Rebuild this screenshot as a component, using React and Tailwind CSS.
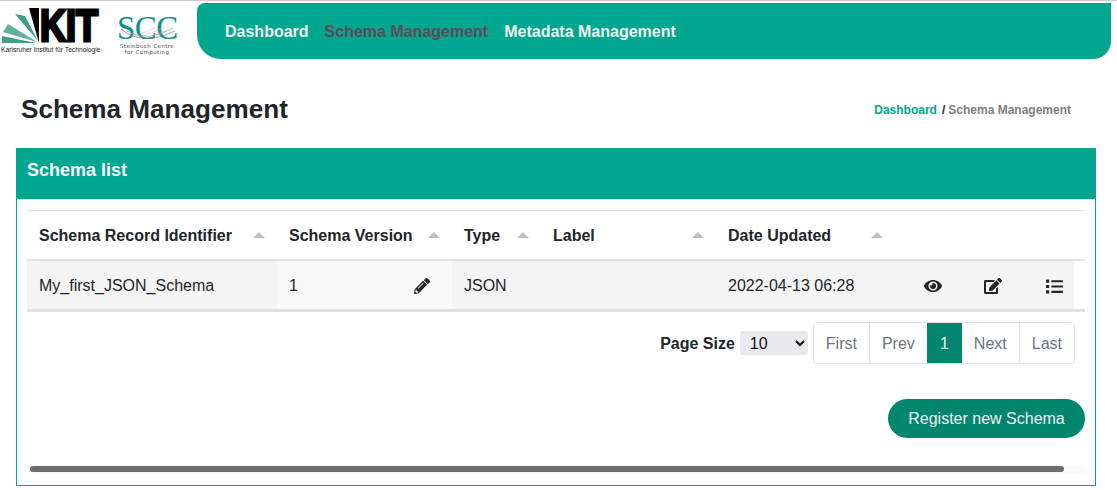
import React from 'react';
import { FaEye, FaEdit, FaList, FaPencilAlt } from 'react-icons/fa';

const headers = [
  { label: 'Schema Record Identifier', width: 'w-[250px]' },
  { label: 'Schema Version', width: 'w-[175px]' },
  { label: 'Type', width: 'w-[89px]' },
  { label: 'Label', width: 'w-[175px]' },
  { label: 'Date Updated', width: 'w-[179px]' },
];

const pages = ['First', 'Prev', '1', 'Next', 'Last'];

const SortCaret = () => (
  <span className="w-0 h-0 border-x-[6px] border-x-transparent border-b-[6px] border-b-[#bdbdbd]" />
);

const KitLogo = () => (
  <div className="w-[104px] flex flex-col items-start">
    <div className="relative h-[37px] w-[100px]">
      <svg className="absolute left-0 top-0" width="40" height="36" viewBox="0 0 40 36">
        <path d="M1 35 L1 28 L35 35 Z" fill="#3f9f86" />
        <path d="M2 24 L7 16 L36 34 Z" fill="#5fb29c" />
        <path d="M14 6 L24 8 L37 33 Z" fill="#3f9f86" />
        <path d="M28 0 L38 0 L38 35 Z" fill="#000000" />
      </svg>
      <span className="absolute left-[39px] top-0 origin-left scale-x-[0.82] font-['Liberation_Sans',sans-serif] font-bold text-[44px] leading-[36px] [-webkit-text-stroke:3px_black] text-black">
        KIT
      </span>
    </div>
    <span className="font-['Liberation_Sans',sans-serif] text-[6.7px] leading-[9px] whitespace-nowrap text-[#222]">
      Karlsruher Institut für Technologie
    </span>
  </div>
);

const SccLogo = () => (
  <div className="w-[62px] flex flex-col items-center ml-[11px] pt-[4px]">
    <div className="relative h-[29px] w-[60px]">
      <span className="absolute left-0 top-[3px] font-['Liberation_Serif',serif] text-[33px] leading-[26px] tracking-[-0.5px] text-[#0f8f8f]">
        SCC
      </span>
      <svg className="absolute left-0 top-[13px]" width="60" height="16" viewBox="0 0 60 16" fill="none">
        <path d="M4 4 Q26 22 58 6" stroke="#777" strokeWidth="0.7" />
        <path d="M10 6 Q30 18 56 3" stroke="#999" strokeWidth="0.7" />
        <path d="M18 11 L38 3 M24 12 L44 4 M30 13 L50 5" stroke="#aaa" strokeWidth="0.4" />
      </svg>
    </div>
    <span className="font-['DejaVu_Sans',sans-serif] text-[5.5px] leading-[6px] tracking-[0.4px] whitespace-nowrap mt-[2px] text-[#444]">
      Steinbuch Centre
    </span>
    <span className="font-['DejaVu_Sans',sans-serif] text-[5.5px] leading-[6px] tracking-[0.4px] whitespace-nowrap text-[#444]">
      for Computing
    </span>
  </div>
);

export default function App() {
  return (
    <div className="w-[1117px] h-[490px] overflow-hidden bg-white font-['Liberation_Sans',sans-serif] text-[16px] text-[#212529]">
      <div className="h-px bg-[#cccccc]" />

      <header className="flex items-start h-[58px] pt-[2px] w-[1111px]">
        <div className="flex items-start w-[197px] pt-[5px] pl-[1px]">
          <KitLogo />
          <SccLogo />
        </div>
        <nav className="flex-1 h-[56px] bg-[#00a78e] rounded-tl-[8px] rounded-bl-[24px] rounded-br-[18px] flex items-center gap-[16px] pl-[28px] pt-[2px] font-bold text-[16px]">
          <span className="text-[#f2f2f2]">Dashboard</span>
          <span className="text-[#5e4b56]">Schema Management</span>
          <span className="text-[#f2f2f2]">Metadata Management</span>
        </nav>
      </header>

      <div className="flex items-center justify-between h-[89px] pl-[21px] pr-[46px] pt-[13px] w-[1117px]">
        <h1 className="text-[26.1px] font-bold text-[#212529]">Schema Management</h1>
        <div className="text-[12px] font-bold flex items-center">
          <span className="text-[#00a78e]">Dashboard</span>
          <span className="text-[#212529] ml-[5px] mr-[3px]">/</span>
          <span className="text-[#808080]">Schema Management</span>
        </div>
      </div>

      <section className="ml-[16px] w-[1080px] h-[338px] border border-[#00a78e] border-t-0 flex flex-col">
        <div className="h-[51px] shrink-0 -ml-px -mr-px bg-[#00a78e] pl-[11px] pt-[11px] text-[18px] font-bold leading-[22px] text-[#f5f5f5]">
          Schema list
        </div>

        <div className="flex-1 px-[10px] pt-[11px] flex flex-col">
          <div className="border-t border-[#dee2e6] border-b-2 border-b-[#dee2e6] h-[51px] flex items-center font-bold">
            {headers.map((h) => (
              <div key={h.label} className={`${h.width} pl-[12px] pr-[12px] pt-[2px] flex items-center justify-between`}>
                <span className="whitespace-nowrap">{h.label}</span>
                <span className="-mt-[2px] flex">
                  <SortCaret />
                </span>
              </div>
            ))}
          </div>

          <div className="border-b-[3px] border-[#dee2e6] h-[51px] flex">
            <div className="w-[1047px] bg-[#f4f4f4] flex items-center">
              <div className="w-[250px] pl-[12px] pt-[2px]">My_first_JSON_Schema</div>
              <div className="w-[175px] h-full bg-[#f8f8f8] pl-[12px] pr-[22px] pt-[2px] flex items-center justify-between">
                <span>1</span>
                <FaPencilAlt className="text-[16px]" />
              </div>
              <div className="w-[89px] pl-[12px] pt-[2px]">JSON</div>
              <div className="w-[175px]" />
              <div className="w-[165px] pl-[12px] pt-[2px] whitespace-nowrap">2022-04-13 06:28</div>
              <div className="w-[193px] flex items-center gap-[42px] pl-[43px] pt-[2px]">
                <FaEye className="text-[18px]" />
                <FaEdit className="text-[18px]" />
                <FaList className="text-[17px] ml-[2px]" />
              </div>
            </div>
          </div>

          <div className="flex items-center justify-end mt-[10px] w-[1048px]">
            <span className="font-bold mr-[5px] pt-[2px]">Page Size</span>
            <select
              defaultValue="10"
              className="w-[68px] h-[24px] bg-[#e9e9ed] rounded-[3px] pl-[6px] mr-[5px] text-[16px] text-[#111111]"
            >
              <option value="10">10</option>
            </select>
            <div className="flex h-[42px] border border-[#dee2e6] rounded-[4px] overflow-hidden text-[#6c757d]">
              {pages.map((p) =>
                p === '1' ? (
                  <span key={p} className="w-[35px] -ml-px bg-[#00856f] text-[#f2f2f2] pt-[2px] flex items-center justify-center">
                    {p}
                  </span>
                ) : (
                  <span key={p} className="px-[12px] pt-[2px] flex items-center border-r border-[#dee2e6] last:border-r-0">
                    {p}
                  </span>
                )
              )}
            </div>
          </div>

          <div className="flex justify-end mt-[35px]">
            <button className="h-[39px] w-[197px] rounded-full bg-[#00856f] text-[#f2f2f2] text-[16px]">
              Register new Schema
            </button>
          </div>

          <div className="mt-[27px] h-[8px] bg-[#fafafa] relative">
            <div className="absolute left-[3px] top-[1px] h-[6px] w-[1034px] rounded-full bg-[#6e6e6e]" />
          </div>
        </div>
      </section>
    </div>
  );
}
